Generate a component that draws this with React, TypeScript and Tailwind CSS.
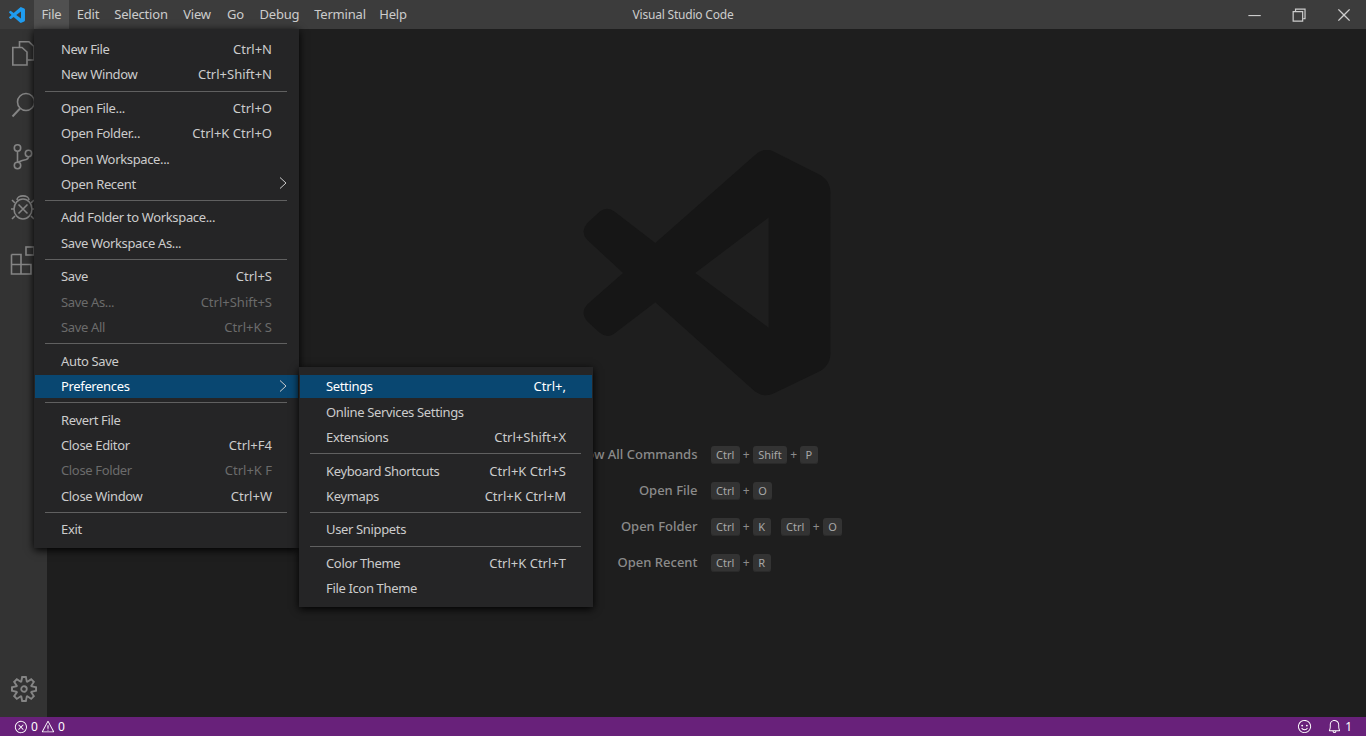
import { VscBell, VscChromeClose, VscChromeMinimize, VscChromeRestore, VscError, VscSettingsGear, VscSmiley, VscWarning } from 'react-icons/vsc';

type Item = { label?: string; keys?: string; disabled?: boolean; active?: boolean; arrow?: boolean };

const fileMenu: Item[] = [
  { label: 'New File', keys: 'Ctrl+N' },
  { label: 'New Window', keys: 'Ctrl+Shift+N' },
  {},
  { label: 'Open File...', keys: 'Ctrl+O' },
  { label: 'Open Folder...', keys: 'Ctrl+K Ctrl+O' },
  { label: 'Open Workspace...' },
  { label: 'Open Recent', arrow: true },
  {},
  { label: 'Add Folder to Workspace...' },
  { label: 'Save Workspace As...' },
  {},
  { label: 'Save', keys: 'Ctrl+S' },
  { label: 'Save As...', keys: 'Ctrl+Shift+S', disabled: true },
  { label: 'Save All', keys: 'Ctrl+K S', disabled: true },
  {},
  { label: 'Auto Save' },
  { label: 'Preferences', arrow: true, active: true },
  {},
  { label: 'Revert File' },
  { label: 'Close Editor', keys: 'Ctrl+F4' },
  { label: 'Close Folder', keys: 'Ctrl+K F', disabled: true },
  { label: 'Close Window', keys: 'Ctrl+W' },
  {},
  { label: 'Exit' },
];

const prefsMenu: Item[] = [
  { label: 'Settings', keys: 'Ctrl+,', active: true },
  { label: 'Online Services Settings' },
  { label: 'Extensions', keys: 'Ctrl+Shift+X' },
  {},
  { label: 'Keyboard Shortcuts', keys: 'Ctrl+K Ctrl+S' },
  { label: 'Keymaps', keys: 'Ctrl+K Ctrl+M' },
  {},
  { label: 'User Snippets' },
  {},
  { label: 'Color Theme', keys: 'Ctrl+K Ctrl+T' },
  { label: 'File Icon Theme' },
];

const menuBar = [
  { name: 'File', cls: 'w-[35px] bg-[#505050]' },
  { name: 'Edit', cls: 'w-[38px]' },
  { name: 'Selection', cls: 'w-[68px]' },
  { name: 'View', cls: 'w-[44px]' },
  { name: 'Go', cls: 'w-[33px]' },
  { name: 'Debug', cls: 'w-[55px]' },
  { name: 'Terminal', cls: 'w-[66px]' },
  { name: 'Help', cls: 'w-[40px]' },
];

const shortcuts = [
  { label: 'Show All Commands', chords: [['Ctrl', 'Shift', 'P']] },
  { label: 'Open File', chords: [['Ctrl', 'O']] },
  { label: 'Open Folder', chords: [['Ctrl', 'K'], ['Ctrl', 'O']] },
  { label: 'Open Recent', chords: [['Ctrl', 'R']] },
];

function Logo({ className, fill }: { className: string; fill: string }) {
  return (
    <svg viewBox="38 60 745 740" className={className}>
      <path
        fill={fill}
        fillRule="evenodd"
        d="M555 75Q580 50 612 65L745 132Q782 150 782 190L782 670Q782 710 745 728L612 792Q580 808 550 782L255 518L132 612Q110 628 88 610L50 575Q28 550 50 525L158 430L50 330Q28 305 50 280L88 245Q110 228 132 245L255 340ZM596 263L375 430L596 595Z"
      />
    </svg>
  );
}

function MenuList({ items, className }: { items: Item[]; className: string }) {
  return (
    <div className={`absolute bg-[#252526] shadow-[0_2px_8px_#000] px-px text-[13px] text-[#cccccc] ${className}`}>
      {items.map((item, i) =>
        item.label ? (
          <div key={i} className="py-[1.17px]">
            <div
              className={`relative flex items-center justify-between h-[23px] pt-[1.5px] px-[26px] ${item.active ? 'bg-[#094771] text-white' : ''} ${item.disabled ? 'text-[#6b6b6b]' : ''}`}
            >
              <span className="tracking-[-0.35px]">{item.label}</span>
              {item.keys && <span>{item.keys}</span>}
              {item.arrow && (
                <svg viewBox="0 0 10 14" className="absolute right-[10px] top-[4px] w-[10px] h-[14px]">
                  <path d="M2 1.5L8 7L2 12.5" fill="none" stroke="#cccccc" strokeWidth="1" />
                </svg>
              )}
            </div>
          </div>
        ) : (
          <div key={i} className="h-[8.33px] flex items-center pl-[10px] pr-[11px]">
            <div className="h-px w-full bg-[#606060]" />
          </div>
        ),
      )}
    </div>
  );
}

function ActivityIcon({ children }: { children: React.ReactNode }) {
  return (
    <svg viewBox="0 0 47 52" className="w-[47px] h-[52px]" fill="none" stroke="#858585" strokeWidth="1.6">
      {children}
    </svg>
  );
}

export default function App() {
  return (
    <div className="relative flex flex-col w-screen h-screen overflow-hidden bg-[#1e1e1e] font-['Noto_Sans',sans-serif]">
      {/* Title bar */}
      <div className="relative flex items-center h-[29px] bg-[#3c3c3c] text-[13px] text-[#cccccc] shrink-0">
        <div className="flex justify-center w-[34px]">
          <Logo className="w-[16px] h-[16px]" fill="#1f9cf0" />
        </div>
        {menuBar.map((m) => (
          <div key={m.name} className={`flex items-center justify-center h-full tracking-[-0.2px] ${m.cls}`}>
            {m.name}
          </div>
        ))}
        <div className="absolute left-0 right-0 text-center text-[12px] tracking-[-0.2px] pointer-events-none">Visual Studio Code</div>
        <div className="ml-auto flex items-center h-full text-[#cccccc]">
          <div className="flex justify-center w-[45px]"><VscChromeMinimize size={18} /></div>
          <div className="flex justify-center w-[45px]"><VscChromeRestore size={19} /></div>
          <div className="flex justify-center w-[45px]"><VscChromeClose size={18} /></div>
        </div>
      </div>

      <div className="flex flex-1 min-h-0">
        {/* Activity bar */}
        <div className="flex flex-col w-[47px] bg-[#333333] shrink-0">
          <ActivityIcon>
            <path d="M19.5 18V12.8H29L34 17.5V31H27.5" />
            <path d="M12.8 18.5H22L27 23V36H12.8Z" />
          </ActivityIcon>
          <ActivityIcon>
            <circle cx="26" cy="21" r="8.5" />
            <path d="M20 27.5L12.5 35.5" strokeWidth="2" />
          </ActivityIcon>
          <ActivityIcon>
            <circle cx="17.5" cy="15" r="3.2" />
            <circle cx="17.5" cy="32.5" r="3.2" />
            <circle cx="28.5" cy="20.5" r="3.2" />
            <path d="M17.5 18.2V29.3M28.5 23.7C28.5 27.5 24 26.5 21 28C19 29 17.5 29.5 17.5 29.5" />
          </ActivityIcon>
          <ActivityIcon>
            <path d="M17 15C17 9.5 29 9.5 29 15" />
            <ellipse cx="23" cy="24" rx="9" ry="10" />
            <path d="M18.5 19.5L27.5 28.5M27.5 19.5L18.5 28.5" />
            <path d="M12 15L15 18M34 15L31 18M11 24H14M32 24H35M12 34L15 31M34 34L31 31" />
          </ActivityIcon>
          <ActivityIcon>
            <path d="M11.5 17.5H21V27M11.5 17.5V37H31V27.5H11.5M21 27.5V37" />
            <rect x="26" y="10" width="8" height="8" />
          </ActivityIcon>
          <div className="mt-auto flex justify-center pb-[15px] text-[#858585]">
            <VscSettingsGear size={26} />
          </div>
        </div>

        {/* Editor watermark */}
        <div className="flex flex-col flex-1 items-center pt-[121px]">
          <Logo className="w-[248px] h-[246px]" fill="#161616" />
          <div className="mt-[41px] grid grid-cols-[300px_305px] gap-x-[13px] text-[13px]">
            {shortcuts.map((s) => (
              <div key={s.label} className="contents">
                <div className="flex items-center justify-end h-[36px] text-[#8b8b8b] font-medium">{s.label}</div>
                <div className="flex items-center h-[36px] gap-[10px]">
                  {s.chords.map((chord, ci) => (
                    <div key={ci} className="flex items-center gap-[3px]">
                      {chord.map((k, ki) => (
                        <div key={ki} className="flex items-center gap-[3px]">
                          {ki > 0 && <span className="text-[#8b8b8b] text-[12px]">+</span>}
                          <span className="flex items-center h-[18px] px-[5.5px] rounded-[3px] bg-[#333333] shadow-[inset_0_-1px_0_#2a2a2a] text-[11px] text-[#a8a8a8]">{k}</span>
                        </div>
                      ))}
                    </div>
                  ))}
                </div>
              </div>
            ))}
          </div>
        </div>
      </div>

      {/* Status bar */}
      <div className="flex items-center h-[19px] bg-[#68217a] text-white text-[12px] shrink-0">
        <div className="flex items-center gap-[3px] pl-[14px]">
          <VscError size={14} />
          <span>0</span>
          <VscWarning size={14} />
          <span>0</span>
        </div>
        <div className="ml-auto flex items-center pr-[14px]">
          <VscSmiley size={15} />
          <VscBell size={15} className="ml-[15px]" />
          <span className="ml-[3px]">1</span>
        </div>
      </div>

      <MenuList items={fileMenu} className="left-[34px] top-[29px] w-[265px] pt-[7.3px] pb-[5.7px]" />
      <MenuList items={prefsMenu} className="left-[299px] top-[367px] w-[294px] pt-[6.6px] pb-[6.4px]" />
    </div>
  );
}
